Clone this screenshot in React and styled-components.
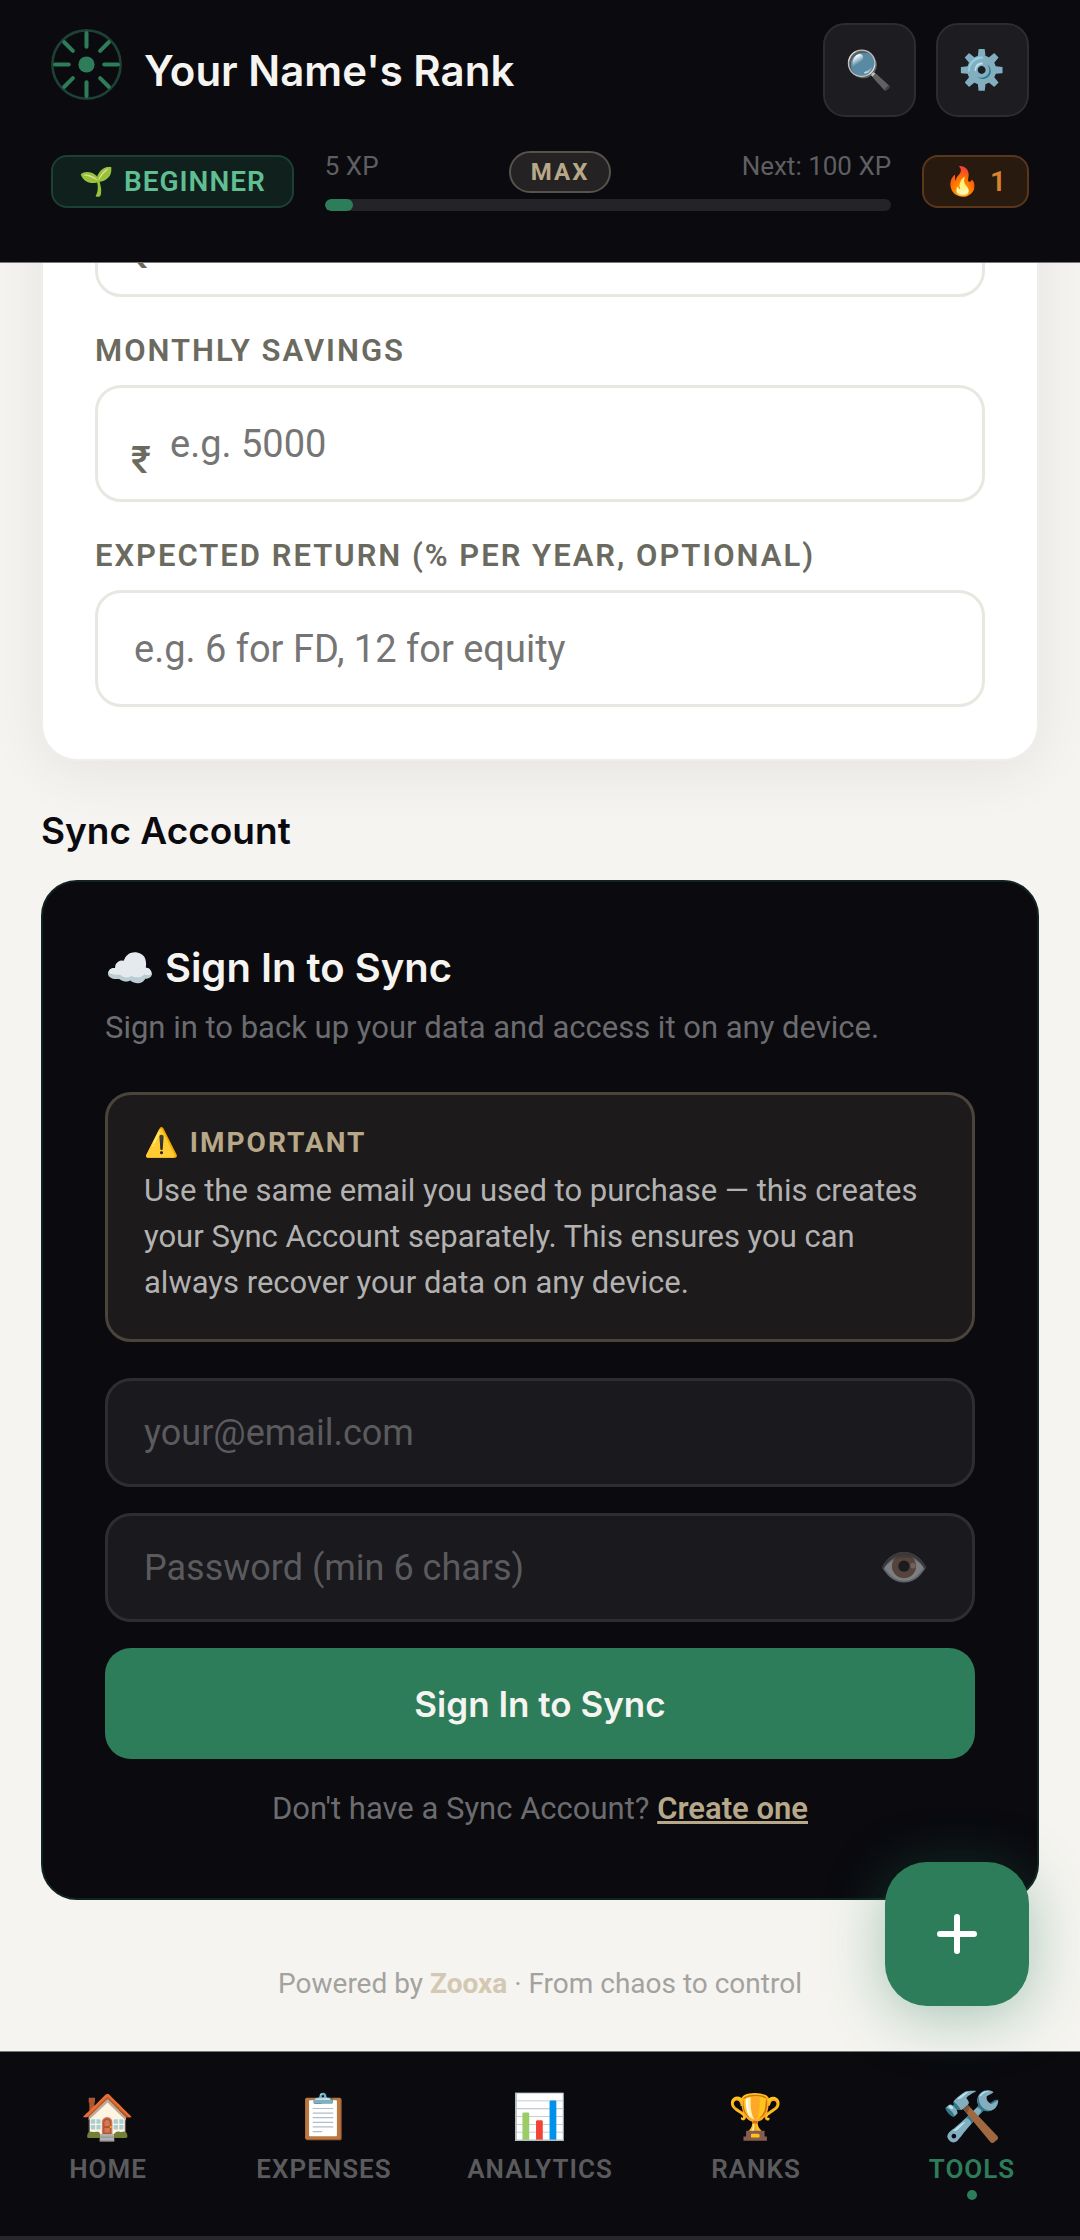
import React, { useLayoutEffect, useRef } from 'react';
import styled, { createGlobalStyle } from 'styled-components';

const GlobalStyle = createGlobalStyle`
  * { box-sizing: border-box; }
  body {
    margin: 0;
    background: #f5f4f0;
    font-family: Roboto, "Noto Color Emoji", sans-serif;
  }
  button, input { font-family: inherit; }
`;

const headingFont = 'Inter, "Noto Color Emoji", sans-serif';

const Shell = styled.div`
  position: relative;
  display: flex;
  flex-direction: column;
  height: 100vh;
`;

/* ---------- header ---------- */

const Header = styled.header`
  display: flex;
  flex-direction: column;
  gap: 34px;
  padding: 23px 51px 51px;
  background: #0a0a0f;
  border-bottom: 1px solid #77777a;
`;

const TopRow = styled.div`
  display: flex;
  align-items: center;
  justify-content: space-between;
`;

const Brand = styled.div`
  display: flex;
  align-items: center;
  gap: 22px;

  svg {
    display: block;
    margin-bottom: 12px;
  }
`;

const Title = styled.h1`
  margin: 0;
  color: #f5f4f0;
  font-family: ${headingFont};
  font-size: 42px;
  font-weight: 600;
`;

const Actions = styled.div`
  display: flex;
  gap: 20px;
`;

const IconButton = styled.button`
  display: flex;
  align-items: center;
  justify-content: center;
  width: 93px;
  height: 94px;
  padding: 0;
  border: 2px solid #2c2c31;
  border-radius: 22px;
  background: #1c1c21;
  font-size: 38px;
`;

const StatsRow = styled.div`
  display: flex;
  align-items: center;
  gap: 31px;
`;

const Badge = styled.div`
  display: flex;
  align-items: center;
  gap: ${p => p.$gap}px;
  height: 53px;
  padding: 0 ${p => p.$pad}px;
  border: 2px solid ${p => p.$border};
  border-radius: 16px;
  background: ${p => p.$bg};
  color: ${p => p.$color};
  font-size: 28px;
  font-weight: 600;
  letter-spacing: ${p => p.$spacing || 0}px;
`;

const Xp = styled.div`
  flex: 1;
`;

const XpLabels = styled.div`
  display: flex;
  justify-content: space-between;
  margin-bottom: 6px;
  color: #5f5f62;
  font-size: 26px;
  line-height: 30px;
`;

const MaxPill = styled.span`
  padding: 4px 20px;
  border: 2px solid #57524b;
  border-radius: 21px;
  background: #242222;
  color: #b8a88a;
  font-size: 24px;
  font-weight: 700;
  letter-spacing: 2px;
`;

const Track = styled.div`
  height: 12px;
  border-radius: 6px;
  background: #232328;
  overflow: hidden;
`;

const Fill = styled.div`
  width: 5%;
  height: 100%;
  border-radius: 6px;
  background: #2d7d5a;
`;

/* ---------- content ---------- */

const Main = styled.main`
  flex: 1;
  min-height: 0;
  padding: 41px 41px 46px;
  overflow-y: auto;
  scrollbar-width: none;
`;

const Card = styled.section`
  display: flex;
  flex-direction: column;
  gap: 33px;
  padding: 52px;
  border: 2px solid #efeeea;
  border-radius: 36px;
  background: #fff;
  box-shadow: 0 10px 60px rgba(10, 10, 15, 0.07);
`;

const Field = styled.div`
  display: flex;
  flex-direction: column;
  gap: 13px;
`;

const Label = styled.label`
  color: #6b6a5f;
  font-size: 31px;
  font-weight: 600;
  line-height: 42px;
  letter-spacing: 2px;
  text-transform: uppercase;
`;

const InputWrap = styled.div`
  position: relative;
`;

const Rupee = styled.span`
  position: absolute;
  left: 36px;
  top: 53px;
  color: #6b6a5f;
  font-size: 38px;
  font-weight: 500;
`;

const Input = styled.input`
  display: block;
  width: 100%;
  height: 117px;
  padding: 0 36px 0 ${p => (p.$prefixed ? 72 : 36)}px;
  border: 3px solid #e8e7e1;
  border-radius: 26px;
  background: #fff;
  font-size: 38px;
  outline: 0;

  &::placeholder { color: #757575; }
`;

const SectionTitle = styled.h2`
  margin: 47px 0 26px;
  color: #0a0a0f;
  font-family: ${headingFont};
  font-size: 37px;
  font-weight: 600;
  line-height: 46px;
`;

const SyncCard = styled.section`
  display: flex;
  flex-direction: column;
  padding: 60px 62px 67px;
  border: 2px solid #11221f;
  border-radius: 36px;
  background: #0a0a0f;
`;

const SyncTitle = styled.h3`
  margin: 0;
  color: #f5f4f0;
  font-family: ${headingFont};
  font-size: 40px;
  font-weight: 600;
  line-height: 52px;
`;

const SyncText = styled.p`
  margin: 11px 0 41px;
  color: #6c6c6f;
  font-size: 31px;
  line-height: 46px;
`;

const Notice = styled.div`
  padding: 28px 36px 33px;
  border: 3px solid #4a443d;
  border-radius: 26px;
  background: #1c1a1a;
`;

const NoticeTitle = styled.div`
  color: #b8a88a;
  font-size: 28px;
  font-weight: 700;
  line-height: 40px;
  letter-spacing: 2px;
`;

const NoticeText = styled.p`
  margin: 5px 0 0;
  color: #b3b2b2;
  font-size: 31px;
  line-height: 46px;
`;

const Form = styled.form`
  display: flex;
  flex-direction: column;
  gap: 26px;
  margin-top: 36px;
`;

const DarkInput = styled.input`
  display: block;
  width: 100%;
  height: 109px;
  padding: 0 36px;
  border: 3px solid #2d2d32;
  border-radius: 26px;
  background: #19191e;
  color: #f5f4f0;
  font-size: 36px;
  outline: 0;

  &::placeholder { color: #5b5b5e; }
`;

const EyeButton = styled.button`
  position: absolute;
  top: 0;
  right: 46px;
  height: 100%;
  padding: 0;
  border: 0;
  background: none;
  font-size: 40px;
  opacity: 0.45;
`;

const Submit = styled.button`
  height: 111px;
  padding: 0;
  border: 0;
  border-radius: 26px;
  background: #2d7d5a;
  color: #f5f4f0;
  font-family: ${headingFont};
  font-size: 35px;
  font-weight: 600;
`;

const Switch = styled.p`
  margin: 28px 0 0;
  color: #6c6c6f;
  font-size: 31px;
  line-height: 44px;
  text-align: center;

  a {
    color: #b8a88a;
    font-weight: 600;
  }
`;

const Footer = styled.footer`
  margin-top: 63px;
  color: #a3a29f;
  font-size: 28px;
  line-height: 42px;
  text-align: center;

  strong { color: #d3c8b1; }
`;

const Fab = styled.button`
  position: absolute;
  right: 51px;
  bottom: 234px;
  z-index: 2;
  display: flex;
  align-items: center;
  justify-content: center;
  width: 144px;
  height: 144px;
  padding: 0;
  border: 0;
  border-radius: 42px;
  background: #2d7d5a;
  box-shadow: 0 10px 60px rgba(45, 125, 90, 0.4);
`;

/* ---------- bottom nav ---------- */

const Nav = styled.nav`
  display: grid;
  grid-template-columns: repeat(5, 1fr);
  height: 189px;
  padding-top: 32px;
  background: #0a0a0f;
  border-top: 1px solid #77777a;
  border-bottom: 4px solid #26282c;
`;

const NavItem = styled.a`
  display: flex;
  flex-direction: column;
  align-items: center;
  color: ${p => (p.$active ? '#2d7d5a' : '#5b5b5e')};
  font-size: 26px;
  font-weight: 600;
  line-height: 34px;
  letter-spacing: 1px;
  text-decoration: none;
`;

const NavIcon = styled.span`
  height: 68px;
  font-size: ${p => (p.$active ? 48 : 44)}px;
  line-height: 66px;
  letter-spacing: 0;
`;

const Dot = styled.span`
  width: 10px;
  height: 10px;
  margin-top: 4px;
  border-radius: 50%;
  background: #2d7d5a;
`;

const spokes = [0, 45, 90, 135, 180, 225, 270, 315];

const Logo = () => (
  <svg width="71" height="71" viewBox="0 0 70 70" fill="none">
    <circle cx="35" cy="35" r="33.6" stroke="#1d4234" strokeWidth="2.6" />
    <circle cx="35" cy="35" r="8" fill="#2d7d5a" />
    {spokes.map(a => (
      <line
        key={a}
        x1="35"
        y1="4"
        x2="35"
        y2={a % 90 ? 16 : 17.5}
        stroke="#2d7d5a"
        strokeWidth="4"
        strokeLinecap="round"
        transform={`rotate(${a} 35 35)`}
      />
    ))}
  </svg>
);

const fields = [
  { id: 'current', name: 'Current savings', rupee: true },
  { id: 'monthly', label: 'Monthly Savings', placeholder: 'e.g. 5000', rupee: true },
  { id: 'return', label: 'Expected Return (% per year, optional)', placeholder: 'e.g. 6 for FD, 12 for equity' },
];

const tabs = [
  { icon: '🏠', label: 'HOME' },
  { icon: '📋', label: 'EXPENSES' },
  { icon: '📊', label: 'ANALYTICS' },
  { icon: '🏆', label: 'RANKS' },
  { icon: '🛠️', label: 'TOOLS', active: true },
];

function App() {
  const main = useRef(null);

  // open on the sync section at the end of the page
  useLayoutEffect(() => {
    main.current.scrollTop = main.current.scrollHeight;
  }, []);

  return (
    <Shell>
      <GlobalStyle />
      <Header>
        <TopRow>
          <Brand>
            <Logo />
            <Title>Your Name's Rank</Title>
          </Brand>
          <Actions>
            <IconButton aria-label="Search">🔍</IconButton>
            <IconButton aria-label="Settings">⚙️</IconButton>
          </Actions>
        </TopRow>
        <StatsRow>
          <Badge $pad={26} $gap={9} $spacing={1} $bg="#10211d" $border="#1b4034" $color="#5fbf92">
            <span>🌱</span>
            <span>BEGINNER</span>
          </Badge>
          <Xp>
            <XpLabels>
              <span>5 XP</span>
              <MaxPill>MAX</MaxPill>
              <span>Next: 100 XP</span>
            </XpLabels>
            <Track>
              <Fill />
            </Track>
          </Xp>
          <Badge $pad={21} $gap={10} $bg="#291a10" $border="#5a361b" $color="#d9822f">
            <span>🔥</span>
            <span>1</span>
          </Badge>
        </StatsRow>
      </Header>

      <Main ref={main}>
        <Card>
          {fields.map(f => (
            <Field key={f.id}>
              {f.label && <Label htmlFor={f.id}>{f.label}</Label>}
              <InputWrap>
                <Input
                  id={f.id}
                  aria-label={f.name}
                  placeholder={f.placeholder}
                  $prefixed={f.rupee}
                  inputMode="numeric"
                />
                {f.rupee && <Rupee>₹</Rupee>}
              </InputWrap>
            </Field>
          ))}
        </Card>

        <SectionTitle>Sync Account</SectionTitle>
        <SyncCard>
          <SyncTitle>☁️ Sign In to Sync</SyncTitle>
          <SyncText>Sign in to back up your data and access it on any device.</SyncText>
          <Notice>
            <NoticeTitle>⚠️ IMPORTANT</NoticeTitle>
            <NoticeText>
              Use the same email you used to purchase — this creates your Sync Account separately. This ensures you can
              always recover your data on any device.
            </NoticeText>
          </Notice>
          <Form onSubmit={e => e.preventDefault()}>
            <DarkInput type="email" aria-label="Email" placeholder="your@email.com" />
            <InputWrap>
              <DarkInput type="password" aria-label="Password" placeholder="Password (min 6 chars)" />
              <EyeButton type="button" aria-label="Show password">👁️</EyeButton>
            </InputWrap>
            <Submit type="submit">Sign In to Sync</Submit>
          </Form>
          <Switch>
            Don't have a Sync Account? <a href="#create">Create one</a>
          </Switch>
        </SyncCard>

        <Footer>
          Powered by <strong>Zooxa</strong> · From chaos to control
        </Footer>
      </Main>

      <Fab aria-label="Add">
        <svg width="40" height="40" viewBox="0 0 40 40" stroke="#fff" strokeWidth="6" strokeLinecap="round">
          <path d="M20 3v34M3 20h34" />
        </svg>
      </Fab>

      <Nav>
        {tabs.map(t => (
          <NavItem key={t.label} href={`#${t.label.toLowerCase()}`} $active={t.active}>
            <NavIcon $active={t.active}>{t.icon}</NavIcon>
            {t.label}
            {t.active && <Dot />}
          </NavItem>
        ))}
      </Nav>
    </Shell>
  );
}

export default App;
